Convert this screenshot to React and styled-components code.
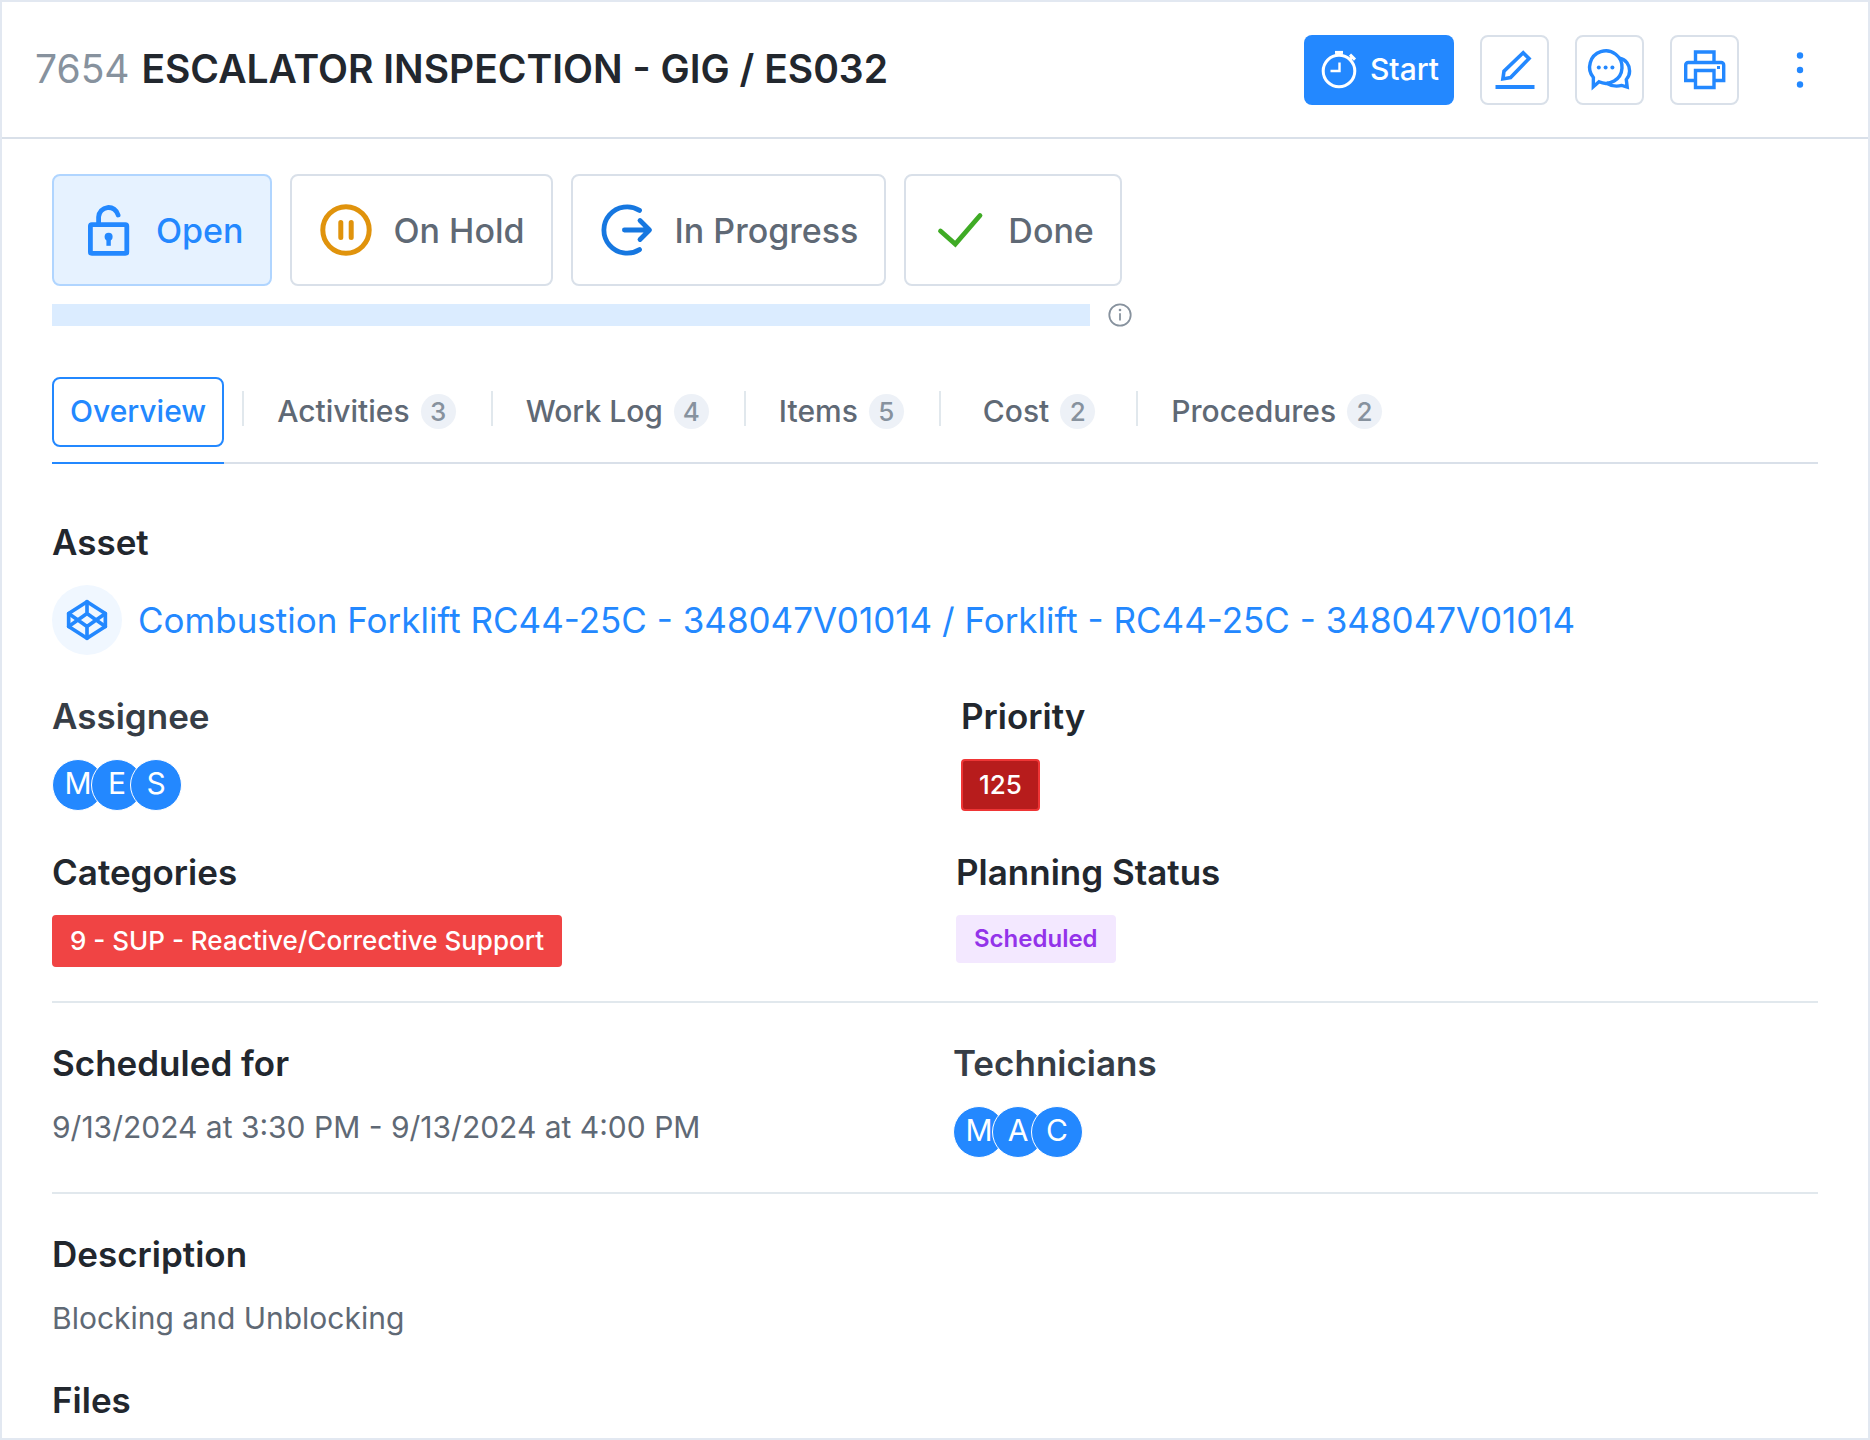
import React, { useState } from "react";
import styled, { createGlobalStyle, css } from "styled-components";

const color = {
  blue: "#2388ff",
  ink: "#22272e",
  inkSoft: "#363d46",
  text: "#5f6975",
  muted: "#87929e",
  border: "#d9e0e9",
  line: "#e1e8ed",
  frame: "#e2e8f1",
};

const GlobalStyle = createGlobalStyle`
  *, *::before, *::after { box-sizing: border-box; }
  body {
    margin: 0;
    background: #fff;
    color: ${color.ink};
    font-family: Inter, "Liberation Sans", sans-serif;
  }
  h1, h2, p { margin: 0; padding: 0; }
  button { font-family: inherit; cursor: pointer; }
  svg { display: block; flex: none; overflow: visible; }
`;

const Panel = styled.main`
  min-height: 100vh;
  border: 2px solid ${color.frame};
  background: #fff;
`;

const Header = styled.header`
  display: flex;
  align-items: center;
  justify-content: space-between;
  gap: 24px;
  min-height: 137px;
  padding: 0 46px 0 33px;
  border-bottom: 2px solid ${color.border};
`;

const Title = styled.h1`
  padding-bottom: 2px;
  font-size: 39px;
  line-height: 48px;
  font-weight: 600;
`;

const TicketNumber = styled.span`
  margin-right: 2px;
  color: ${color.muted};
  font-weight: 400;
`;

const Actions = styled.div`
  display: flex;
  align-items: center;
  gap: 26px;
`;

const StartButton = styled.button`
  display: flex;
  align-items: center;
  gap: 13px;
  height: 70px;
  padding: 0 15px 2px 17px;
  border: 0;
  border-radius: 8px;
  background: ${color.blue};
  color: #fff;
  font-size: 30px;
  font-weight: 500;
`;

const IconButton = styled.button`
  display: grid;
  place-items: center;
  width: ${(p) => (p.$plain ? "44px" : "69px")};
  height: 70px;
  margin-left: ${(p) => (p.$plain ? "13px" : "0")};
  padding: 0;
  border: 2px solid ${(p) => (p.$plain ? "transparent" : color.border)};
  border-radius: 8px;
  background: transparent;
  color: ${color.blue};
`;

const Content = styled.div`
  padding: 35px 50px 16px;
`;

const StatusList = styled.div`
  display: flex;
  flex-wrap: wrap;
  gap: 18px;
`;

const StatusButton = styled.button`
  display: flex;
  align-items: center;
  gap: 22px;
  height: 112px;
  padding: 0 26px 0 28px;
  border: 2px solid ${(p) => (p.$active ? "#b0d5ff" : color.border)};
  border-radius: 8px;
  background: ${(p) => (p.$active ? "#e6f2ff" : "#fff")};
  color: ${(p) => (p.$active ? color.blue : color.text)};
  font-size: 34px;
  font-weight: 500;
`;

const ProgressRow = styled.div`
  display: flex;
  align-items: center;
  gap: 18px;
  max-width: 1080px;
  margin-top: 17px;
`;

const ProgressTrack = styled.div`
  flex: 1;
  height: 22px;
  background: #dbecff;
`;

const InfoButton = styled.button`
  display: grid;
  padding: 0;
  border: 0;
  background: none;
  color: ${color.muted};
`;

const Tabs = styled.div`
  display: flex;
  margin-top: 50px;
  border-bottom: 2px solid ${color.border};
`;

const TabSlot = styled.div`
  display: flex;
  margin-bottom: -2px;
  padding-bottom: 15px;
  border-bottom: 2px solid ${(p) => (p.$active ? color.blue : "transparent")};
`;

const dividerLead = { tight: "18px", normal: "35px", loose: "41px" };

const TabDivider = styled.span`
  width: 2px;
  height: 35px;
  margin: 14px ${(p) => (p.$wide ? "42px" : "33px")} 0 ${(p) => dividerLead[p.$lead]};
  background: ${color.line};
`;

const Tab = styled.button`
  display: flex;
  align-items: center;
  gap: 11px;
  height: 70px;
  padding: ${(p) => (p.$active ? "0 16px 2px" : "0 0 2px")};
  border: ${(p) => (p.$active ? `2px solid ${color.blue}` : "0")};
  border-radius: 8px;
  background: none;
  color: ${(p) => (p.$active ? color.blue : color.text)};
  font-size: 30px;
  font-weight: 500;
`;

const Count = styled.span`
  display: grid;
  place-items: center;
  min-width: 35px;
  height: 35px;
  border-radius: 18px;
  background: #edf1f7;
  color: ${color.muted};
  font-size: 26px;
`;

const Stack = styled.div`
  display: grid;
  gap: 40px;
  padding-top: ${(p) => (p.$first ? "57px" : "39px")};
  ${(p) =>
    p.$ruled &&
    css`
      padding-bottom: 34px;
      border-bottom: 2px solid ${color.line};
    `}
`;

const Columns = styled.div`
  display: grid;
  grid-template-columns: ${(p) => p.$left}fr ${(p) => 1766 - p.$left}fr;
`;

const Field = styled.section`
  display: grid;
  gap: 22px;
  align-content: start;
  justify-items: start;
`;

const FieldLabel = styled.h2`
  color: ${(p) => (p.$soft ? color.inkSoft : color.ink)};
  font-size: 35px;
  line-height: 42px;
  font-weight: 600;
`;

const FieldText = styled.p`
  color: ${color.text};
  font-size: 30px;
  line-height: 42px;
`;

const AssetRow = styled.div`
  display: flex;
  align-items: center;
  gap: 16px;
`;

const AssetIcon = styled.span`
  display: grid;
  place-items: center;
  width: 70px;
  height: 70px;
  border-radius: 50%;
  background: #f0f7ff;
  color: ${color.blue};
`;

const AssetLink = styled.a`
  color: ${color.blue};
  font-size: 35px;
  line-height: 42px;
  text-decoration: none;
`;

const AvatarGroup = styled.div`
  display: flex;
  align-items: center;
  height: 52px;
`;

const Avatar = styled.span`
  display: grid;
  place-items: center;
  width: 52px;
  height: 52px;
  padding-bottom: 4px;
  border: 1px solid #fff;
  border-radius: 50%;
  background: ${color.blue};
  color: #fff;
  font-size: 30px;
  & + & { margin-left: -13px; }
`;

const tones = {
  critical: { bg: "#b71c1c", border: "#ef3535", fg: "#fff" },
  danger: { bg: "#f04444", border: "#f04444", fg: "#fff" },
  planned: { bg: "#f3e8ff", border: "#f3e8ff", fg: "#9333ea" },
};

const Tag = styled.span`
  display: flex;
  align-items: center;
  height: ${(p) => (p.$small ? "48px" : "52px")};
  padding: 0 16px 2px;
  border: 2px solid ${(p) => tones[p.$tone].border};
  border-radius: 4px;
  background: ${(p) => tones[p.$tone].bg};
  color: ${(p) => tones[p.$tone].fg};
  font-size: ${(p) => (p.$small ? "24px" : "26px")};
  font-weight: ${(p) => (p.$small ? 600 : 500)};
`;

const TimerIcon = () => (
  <svg width="36" height="38" viewBox="0 0 36 38" fill="none" stroke="currentColor" strokeWidth="3" aria-hidden="true">
    <circle cx="18" cy="21" r="15.8" />
    <path d="M18.5 12.5V21H9.5" strokeWidth="2.4" />
    <path d="M14 2.4h8" />
    <path d="M18 2v4" strokeWidth="5" />
    <path d="M29 4.6l5 5" />
    <path d="M28.6 9.8l2-2" />
  </svg>
);

const PencilIcon = () => (
  <svg width="40" height="40" viewBox="0 0 40 40" fill="none" stroke="currentColor" strokeWidth="3.6" aria-hidden="true">
    <path d="M28.2 2.8l5.8 5.8-18.4 18.9-7.7 1.4 1.1-7.8z" />
    <path d="M.5 37h39" strokeWidth="4" />
  </svg>
);

const ChatIcon = () => (
  <svg width="40" height="40" viewBox="0 0 40 40" fill="none" stroke="currentColor" strokeWidth="3.4" aria-hidden="true">
    <path d="M3.4 27.5A16.2 16.2 0 1 1 9 31.8L3.3 36.8z" />
    <path d="M29.5 8.2C36 9.5 39.6 15 39.6 21c0 3.5-1.1 6-3.3 8.5l.9 7.6-5.4-1.7c-6 1.6-10.5.8-15.5-2.4" />
    <g fill="currentColor" stroke="none">
      <circle cx="8.8" cy="17.5" r="2" />
      <circle cx="15.6" cy="17.5" r="2" />
      <circle cx="22.4" cy="17.5" r="2" />
    </g>
  </svg>
);

const PrinterIcon = () => (
  <svg width="40" height="40" viewBox="0 0 40 40" fill="none" stroke="currentColor" strokeWidth="3.4" aria-hidden="true">
    <path d="M10.5 12.5V2H29v10.5" />
    <path d="M10.5 30.5H.7V15a2.5 2.5 0 0 1 2.5-2.5h33a2.5 2.5 0 0 1 2.5 2.5v15.500H29" />
    <path d="M10.5 20.5H29v17H10.500z" />
    <path d="M32 17.500h3" strokeWidth="3" />
  </svg>
);

const MoreIcon = () => (
  <svg width="6" height="36" viewBox="0 0 6 36" fill="currentColor" aria-hidden="true">
    <circle cx="3" cy="3.5" r="3.2" />
    <circle cx="3" cy="18" r="3.2" />
    <circle cx="3" cy="32.5" r="3.2" />
  </svg>
);

const LockIcon = () => (
  <svg width="52" height="52" viewBox="0 0 52 52" fill="none" stroke="currentColor" strokeWidth="4.8" aria-hidden="true">
    <rect x="8.4" y="20.6" width="36.4" height="28.8" rx="1.5" />
    <path d="M16.6 20.5V13a9.9 9.9 0 0 1 19.5-2" strokeLinecap="round" />
    <circle cx="26.6" cy="32.8" r="4" fill="currentColor" stroke="none" />
    <path d="M26.6 33v8.8" strokeWidth="4.4" />
  </svg>
);

const PauseIcon = () => (
  <svg width="52" height="52" viewBox="0 0 52 52" fill="none" stroke="#e0930c" strokeWidth="5" strokeLinecap="round" aria-hidden="true">
    <circle cx="26" cy="26" r="23.2" />
    <path d="M20.8 18.5v15M31.2 18.5v15" />
  </svg>
);

const ProgressIcon = () => (
  <svg width="52" height="52" viewBox="0 0 52 52" fill="none" stroke="#1677e0" strokeWidth="4.8" strokeLinecap="round" strokeLinejoin="round" aria-hidden="true">
    <path d="M38.5 6.4A23.2 23.2 0 1 0 38.5 45.6" />
    <path d="M23.4 26H48M39 16.5L48.5 26 39 35.5" />
  </svg>
);

const CheckIcon = () => (
  <svg width="52" height="52" viewBox="0 0 52 52" fill="none" stroke="#3fab25" strokeWidth="4.8" strokeLinecap="round" aria-hidden="true">
    <path d="M6.5 27l14.8 13L46 11.5" />
  </svg>
);

const InfoIcon = () => (
  <svg width="24" height="24" viewBox="0 0 24 24" fill="none" stroke="currentColor" strokeWidth="1.8" aria-hidden="true">
    <circle cx="12" cy="12" r="10.7" />
    <path d="M12 10.2v7.2" />
    <circle cx="12" cy="7" r="1.3" fill="currentColor" stroke="none" />
  </svg>
);

const AssetGlyph = () => (
  <svg width="44" height="44" viewBox="0 0 24 24" fill="none" stroke="currentColor" strokeWidth="2" strokeLinecap="round" strokeLinejoin="round" aria-hidden="true">
    <path d="M12 2l10 6.5v7L12 22 2 15.5v-7z" />
    <path d="M12 22v-6.5M22 8.5l-10 7-10-7M2 15.5l10-7 10 7M12 2v6.5" />
  </svg>
);

const statuses = [
  { id: "open", label: "Open", Icon: LockIcon },
  { id: "hold", label: "On Hold", Icon: PauseIcon },
  { id: "progress", label: "In Progress", Icon: ProgressIcon },
  { id: "done", label: "Done", Icon: CheckIcon },
];

const tabs = [
  { label: "Overview" },
  { label: "Activities", count: 3, lead: "tight" },
  { label: "Work Log", count: 4, lead: "normal" },
  { label: "Items", count: 5, lead: "normal" },
  { label: "Cost", count: 2, lead: "normal", wide: true },
  { label: "Procedures", count: 2, lead: "loose" },
];

const Avatars = ({ initials }) => (
  <AvatarGroup>
    {initials.map((letter) => (
      <Avatar key={letter}>{letter}</Avatar>
    ))}
  </AvatarGroup>
);

export default function App() {
  const [status, setStatus] = useState("open");
  const [tab, setTab] = useState("Overview");

  return (
    <>
      <GlobalStyle />
      <Panel>
        <Header>
          <Title>
            <TicketNumber>7654</TicketNumber> ESCALATOR INSPECTION - GIG / ES032
          </Title>
          <Actions>
            <StartButton type="button">
              <TimerIcon />
              Start
            </StartButton>
            <IconButton type="button" aria-label="Edit">
              <PencilIcon />
            </IconButton>
            <IconButton type="button" aria-label="Comments">
              <ChatIcon />
            </IconButton>
            <IconButton type="button" aria-label="Print">
              <PrinterIcon />
            </IconButton>
            <IconButton type="button" aria-label="More" $plain>
              <MoreIcon />
            </IconButton>
          </Actions>
        </Header>

        <Content>
          <StatusList>
            {statuses.map(({ id, label, Icon }) => (
              <StatusButton
                key={id}
                type="button"
                aria-pressed={status === id}
                $active={status === id}
                onClick={() => setStatus(id)}
              >
                <Icon />
                {label}
              </StatusButton>
            ))}
          </StatusList>
          <ProgressRow>
            <ProgressTrack role="progressbar" aria-label="Progress" aria-valuenow={0} />
            <InfoButton type="button" aria-label="Progress info">
              <InfoIcon />
            </InfoButton>
          </ProgressRow>

          <Tabs role="tablist">
            {tabs.map(({ label, count, lead, wide }) => (
              <React.Fragment key={label}>
                {lead && <TabDivider $lead={lead} $wide={wide} />}
                <TabSlot $active={tab === label}>
                  <Tab
                    type="button"
                    role="tab"
                    aria-selected={tab === label}
                    $active={tab === label}
                    onClick={() => setTab(label)}
                  >
                    {label}
                    {count && <Count>{count}</Count>}
                  </Tab>
                </TabSlot>
              </React.Fragment>
            ))}
          </Tabs>

          <Stack $first $ruled>
            <Field>
              <FieldLabel>Asset</FieldLabel>
              <AssetRow>
                <AssetIcon>
                  <AssetGlyph />
                </AssetIcon>
                <AssetLink href="#asset">
                  Combustion Forklift RC44-25C - 348047V01014 / Forklift - RC44-25C - 348047V01014
                </AssetLink>
              </AssetRow>
            </Field>
            <Columns $left={909}>
              <Field>
                <FieldLabel $soft>Assignee</FieldLabel>
                <Avatars initials={["M", "E", "S"]} />
              </Field>
              <Field>
                <FieldLabel>Priority</FieldLabel>
                <Tag $tone="critical">125</Tag>
              </Field>
            </Columns>
            <Columns $left={904}>
              <Field>
                <FieldLabel>Categories</FieldLabel>
                <Tag $tone="danger">9 - SUP - Reactive/Corrective Support</Tag>
              </Field>
              <Field>
                <FieldLabel>Planning Status</FieldLabel>
                <Tag $tone="planned" $small>Scheduled</Tag>
              </Field>
            </Columns>
          </Stack>

          <Stack $ruled>
            <Columns $left={901}>
              <Field>
                <FieldLabel>Scheduled for</FieldLabel>
                <FieldText>9/13/2024 at 3:30 PM - 9/13/2024 at 4:00 PM</FieldText>
              </Field>
              <Field>
                <FieldLabel $soft>Technicians</FieldLabel>
                <Avatars initials={["M", "A", "C"]} />
              </Field>
            </Columns>
          </Stack>

          <Stack>
            <Field>
              <FieldLabel>Description</FieldLabel>
              <FieldText>Blocking and Unblocking</FieldText>
            </Field>
            <Field>
              <FieldLabel>Files</FieldLabel>
            </Field>
          </Stack>
        </Content>
      </Panel>
    </>
  );
}
